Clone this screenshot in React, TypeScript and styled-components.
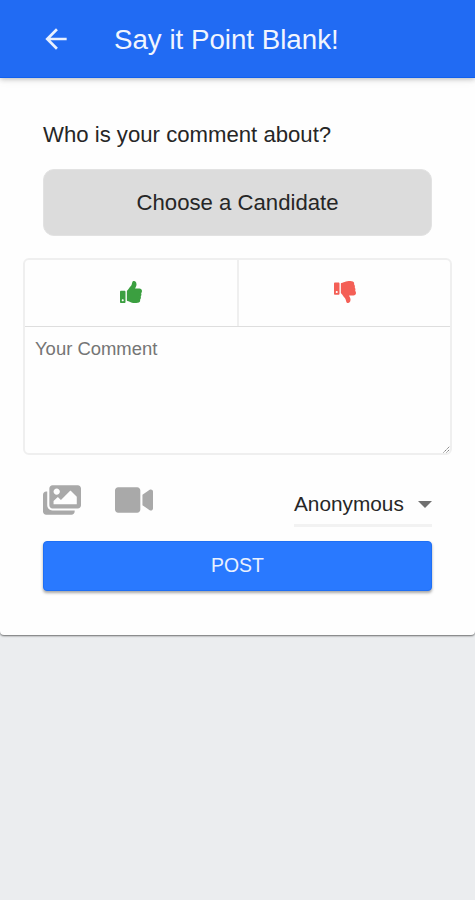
import React from 'react';
import styled, { createGlobalStyle } from 'styled-components';
import { FaThumbsUp, FaThumbsDown, FaImages, FaVideo } from 'react-icons/fa';
import { MdArrowBack } from 'react-icons/md';

const GlobalStyle = createGlobalStyle`
  * { box-sizing: border-box; }
  body {
    margin: 0;
    background: #ebedef;
    font-family: "Liberation Sans", Arial, sans-serif;
    color: #262626;
  }
  button, textarea { font-family: inherit; }
`;

const Screen = styled.div`
  display: flex;
  flex-direction: column;
  height: 900px;
  background: #ebedef;
  overflow: hidden;
`;

const AppBar = styled.header`
  position: relative;
  z-index: 1;
  display: flex;
  align-items: center;
  gap: 42px;
  height: 78px;
  padding-left: 40px;
  background: #216bf3;
  border-bottom: 1px solid #1160ee;
  box-shadow: 0 1px 5px rgba(0, 0, 0, 0.24), 0 3px 9px rgba(0, 0, 0, 0.05);
`;

const BackButton = styled.button`
  display: flex;
  padding: 0;
  border: 0;
  background: none;
  color: #e9f0fe;
  font-size: 32px;
`;

const Title = styled.h1`
  margin: 0;
  padding-top: 2px;
  color: #f1f5fe;
  font-size: 27.7px;
  font-weight: 400;
  line-height: 32px;
`;

const Card = styled.main`
  display: flex;
  flex-direction: column;
  height: 557px;
  padding: 43px 23px 0;
  background: #fefefe;
  border-radius: 0 0 4px 4px;
  box-shadow: 0 1px 2px rgba(0, 0, 0, 0.55);
`;

const Question = styled.label`
  margin: 0 20px;
  font-size: 22.16px;
  line-height: 28px;
`;

const CandidateButton = styled.button`
  height: 67px;
  margin: 20px 20px 22px;
  padding: 0;
  border: 1px solid #e2e2e2;
  border-radius: 11px;
  background: #dcdcdc;
  color: #262626;
  font-size: 22.16px;
`;

const CommentBox = styled.section`
  position: relative;
  height: 197px;
  border: 2px solid #efefef;
  border-radius: 6px;
`;

const VoteRow = styled.div`
  display: grid;
  grid-template-columns: 214px 1fr;
  height: 67px;
  border-bottom: 1px solid #dedede;
`;

const VoteButton = styled.button<{ $color: string; $divided?: boolean }>`
  display: flex;
  align-items: center;
  justify-content: center;
  padding: 0 0 3px;
  border: 0;
  border-right: ${({ $divided }) => ($divided ? '2px solid #efefef' : '0')};
  background: none;
  color: ${({ $color }) => $color};
  font-size: 22px;
`;

const CommentInput = styled.textarea`
  display: block;
  width: 100%;
  height: 124px;
  padding: 11px 10px;
  border: 0;
  outline: 0;
  resize: none;
  background: transparent;
  font-size: 18.47px;
  line-height: 22px;
  &::placeholder { color: #757575; opacity: 1; }
`;

const Grip = styled.svg`
  position: absolute;
  right: 0;
  bottom: 0;
  width: 7px;
  height: 7px;
`;

const Options = styled.div`
  display: flex;
  justify-content: space-between;
  height: 72px;
  margin: 0 20px 14px;
`;

const MediaButtons = styled.div`
  display: flex;
  align-items: flex-start;
  gap: 34px;
  padding-top: 26px;
`;

const MediaButton = styled.button`
  display: flex;
  padding: 0;
  border: 0;
  background: none;
  color: #a9a9a9;
  font-size: 38px;
`;

const AuthorSelect = styled.div`
  display: flex;
  align-items: center;
  justify-content: space-between;
  width: 138px;
  height: 45px;
  margin-top: 27px;
  padding-top: 2px;
  border-bottom: 3px solid #f2f2f2;
  font-size: 20.8px;
`;

const Caret = styled.span`
  border: 7px solid transparent;
  border-top-color: #707070;
  border-bottom: 0;
`;

const PostButton = styled.button`
  height: 50px;
  flex-shrink: 0;
  margin: 0 20px;
  padding: 0 0 1px;
  border: 1px solid #1e6ff5;
  border-radius: 4px;
  background: #2979ff;
  box-shadow: 0 2px 3px rgba(0, 0, 0, 0.35);
  color: #eaf1ff;
  font-size: 19.4px;
`;

export default function App() {
  return (
    <>
      <GlobalStyle />
      <Screen>
        <AppBar>
          <BackButton aria-label="Back"><MdArrowBack /></BackButton>
          <Title>Say it Point Blank!</Title>
        </AppBar>
        <Card>
          <Question>Who is your comment about?</Question>
          <CandidateButton>Choose a Candidate</CandidateButton>
          <CommentBox>
            <VoteRow>
              <VoteButton $color="#3b9f40" $divided aria-label="Approve"><FaThumbsUp /></VoteButton>
              <VoteButton $color="#f45f56" aria-label="Disapprove"><FaThumbsDown /></VoteButton>
            </VoteRow>
            <CommentInput placeholder="Your Comment" />
            <Grip viewBox="0 0 7 7" stroke="#777" strokeWidth="1">
              <path d="M0.5 6.5L6.5 0.5M3.5 6.5L6.5 3.5" strokeDasharray="1.5 .7" />
            </Grip>
          </CommentBox>
          <Options>
            <MediaButtons>
              <MediaButton aria-label="Add image"><FaImages /></MediaButton>
              <MediaButton aria-label="Add video"><FaVideo /></MediaButton>
            </MediaButtons>
            <AuthorSelect>Anonymous<Caret /></AuthorSelect>
          </Options>
          <PostButton>POST</PostButton>
        </Card>
      </Screen>
    </>
  );
}
